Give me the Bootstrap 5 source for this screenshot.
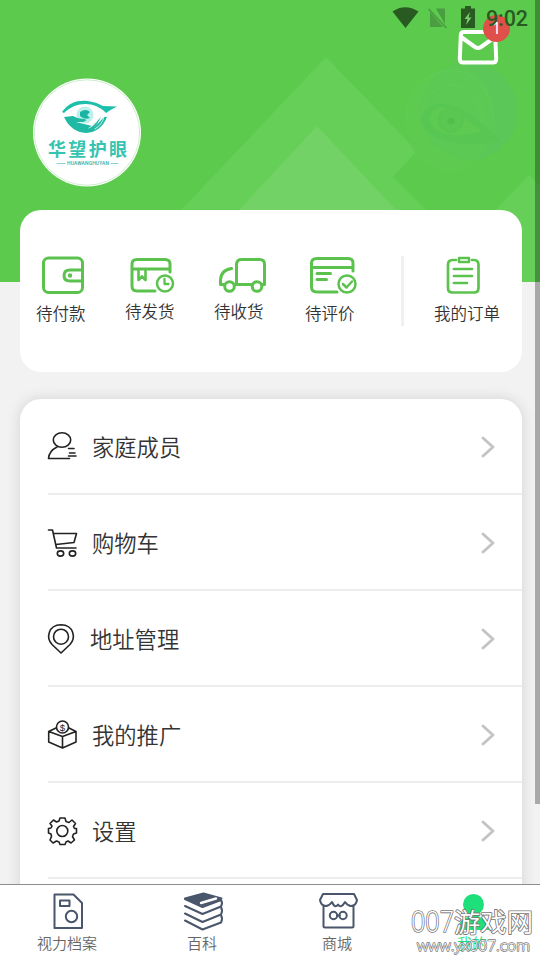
<!DOCTYPE html>
<html lang="zh-CN">
<head>
<meta charset="utf-8">
<meta name="viewport" content="width=device-width, initial-scale=1">
<title>我的</title>
<link href="https://cdn.jsdelivr.net/npm/bootstrap@5.3.0/dist/css/bootstrap.min.css" rel="stylesheet">
<style>
html,body{height:100%;overflow:hidden}
body{font-family:"Noto Sans CJK SC",sans-serif;background:#f2f2f2;color:#333;font-weight:350}
svg{display:block;overflow:visible;fill:none;stroke-linecap:round;stroke-linejoin:round}
.screen{width:540px;height:960px}
.hero{height:282px;background:#5cca4d;overflow:hidden}
.hero-art{left:0;top:0}
.status{left:390px;top:0}
.content{height:884px;overflow:hidden}
.hero-top{height:210px;padding:78px 0 0 33px}
.mail{left:456px;top:28px}
.mail-count{left:483px;top:15px;width:27px;height:27px;background:#e0504b;font:400 16px/27px "Noto Sans",sans-serif}
.clock{left:486px;top:7px;font:500 21.5px/24px Roboto,sans-serif;color:#285a22;letter-spacing:-.1px}
.panel{width:502px;margin-left:20px;background:#fff}
.orders{height:162px;border-radius:21px;padding:42px 0 0 16px}
.order-item{width:50px;margin-right:39px}
.order-item.last-step{margin:0 0 0 2px}
.order-item.wide{width:68px;margin-right:0}
.order-label{font-size:16.5px;line-height:24px;white-space:nowrap;padding-top:1px}
.order-item svg{stroke:#5cc24e;stroke-width:3}
.low .order-label{padding-top:3px}
.divider{width:3px;height:70px;background:#f0f0f0;margin:4px 30px 0 46px}
.menu{margin-top:27px;border-radius:21px 21px 0 0;box-shadow:0 0 14px rgba(40,40,60,.15);height:600px;padding-left:28px}
.menu-row{height:96px;border-bottom:2px solid #ededed;font-size:22.3px;padding:2px 27px 0 0}
.menu-icon{stroke:#222;stroke-width:1.6;margin:0 15px 0 -1px}
.menu-icon.narrow{margin-right:13px}
.chev{stroke:#c4c4c4;stroke-width:3}
.tabs{height:76px;border-top:1px solid #8d8d8d;background:#fff;font-size:15px;font-weight:350;color:#666}
.tabs svg{stroke:#4a566b;stroke-width:2}
.tab-label{line-height:20px;margin-top:2px;margin-left:-1px}
.tab-on{color:#1ee07a}
.thumb{left:535px;top:0;width:5px;height:804px;background:rgba(0,0,0,.3)}
.stamp{left:410px;top:902px}
</style>
<script src="https://cdn.jsdelivr.net/npm/bootstrap@5.3.0/dist/js/bootstrap.bundle.min.js"></script>
</head>
<body>
<div class="screen position-relative overflow-hidden">
<main class="content position-relative">
  <div class="hero position-absolute top-0 start-0 w-100">
    <svg class="hero-art" width="540" height="282" viewBox="0 0 540 282">
      <path d="M326 57 417 151 393 177 498 282H113z" fill="#66cf58"/>
      <path d="M317 126 464 282H172z" fill="#72d265"/>
      <path d="M529 175 426 282H540V186z" fill="#66cf58"/>
      <ellipse cx="450" cy="122" rx="44" ry="50" fill="#5ecb50"/>
      <circle cx="469" cy="111" r="49" fill="#5bc953"/>
      <path d="M477 63A49 49 0 0 1 478 159 55 55 0 0 0 494 120Q494 82 466 66z" fill="#5ac758"/>
      <path d="M406 122C405 57 492 50 494 122M421 120C422 75 480 70 482 121" stroke="#63cd5a" stroke-width=".8"/>
      <path d="M420 119Q427 103 443 104 469 107 500 141 465 148 442 140 426 135 420 119z" fill="#58c652"/>
      <path d="M429 118Q438 97 463 117L482 131Q454 139 438 131 431 126 429 118z" fill="#5fca51"/>
      <circle cx="451" cy="120" r="13" fill="#58c651"/>
      <circle cx="451" cy="120" r="8.500" fill="#5ac752" stroke="#5dca55"/>
      <circle cx="451" cy="121" r="3.500" fill="#53bf4a"/>
    </svg>
  </div>

  <header class="hero-top position-relative">
    <svg width="108" height="109" viewBox="33 78 108 109">
      <circle cx="87" cy="132.500" r="54" fill="#fff"/>
      <circle cx="87" cy="132.500" r="52.700" stroke="#9bdc98" stroke-width=".5"/>
      <circle cx="85" cy="115" r="8.500" fill="#bdf0ea"/>
      <path d="M80 112Q86 108 90 112L87 115 90 118Q84 120 80 116z" fill="#18b5a2"/>
      <path d="M62 112C73 96 92 100 103 106L117 106.500Q110 110 106 113C94 100 75 102 64 113z" fill="#1dbfac"/>
      <path d="M64 117 73 116Q78 119 85 119 88 121 82 122L76 122 92 126 101 117Q98 124 93 129L104 117 107 117Q101 132 86 133 71 132 64 117z" fill="#1fb9a4"/>
      <path d="M89 128Q97 124 99 117M95 129Q102 125 104 117" stroke="#fff" stroke-width=".8"/>
      <text x="48" y="156" textLength="79" font-family="Noto Sans CJK SC,sans-serif" font-weight="700" font-size="18" fill="#35c4b2">华望护眼</text>
      <text x="67" y="165" textLength="42" font-family="Roboto,sans-serif" font-weight="500" font-size="5" fill="#37aaa0">HUAWANGHUYAN</text>
      <path d="M57 163.500H65M111 163.500H118" stroke="#6cc8bd" stroke-width=".8"/>
    </svg>
    <svg class="mail position-absolute" width="44" height="38" viewBox="456 28 44 38">
      <path d="M464 32H492Q495 32 495.200 35L496.200 59Q496.200 62.500 493 62.500H463Q459.800 62.500 459.800 59L460.800 35Q461 32 464 32zM461 37 475 47Q478 49 481 47L495 37" stroke="#fff" stroke-width="4"/>
    </svg>
    <div class="mail-count position-absolute rounded-circle text-white text-center">1</div>
    <svg class="status position-absolute" width="90" height="32" viewBox="390 0 90 32">
      <path d="M392.500 11.500Q405 3 418.500 11.500L405.500 28z" fill="#285a22"/>
      <path d="M436 8.500H445V24zM430 12V27H443z" fill="#4a9d40"/>
      <path d="M429 9.500 446 27.500" stroke="#4a9d40" stroke-width="1.700"/>
      <path d="M461 8.500H465V6H471V8.500H475V28H461z" fill="#285a22"/>
      <path d="M470 12 464.500 19H467.500L466 25 471.500 17.500H468.500z" fill="#78cf6b"/>
    </svg>
    <div class="clock position-absolute">9:02</div>
  </header>

  <section class="panel orders position-relative d-flex align-items-start">
    <div class="order-item low">
      <svg width="50" height="46" viewBox="36 252 50 46"><rect x="43.500" y="258" width="39" height="34.500" rx="5"/><path d="M82 270H70Q64 270 64 275.500T70 281H82"/><circle cx="70" cy="275.500" r="1.200" fill="#5cc24e" stroke-width="2"/></svg>
      <div class="order-label">待付款</div>
    </div>
    <div class="order-item">
      <svg width="50" height="46" viewBox="125 252 50 46"><path d="M155 291H137Q132 291 132 286V264Q132 259.500 137 259.500H165Q170 259.500 170 264V272M132 269H170"/><path d="M138.500 270V280L142 276.500 145.500 280V270" stroke-width="2.600"/><circle cx="165" cy="283.500" r="8" stroke-width="2.500"/><path d="M164.500 279V284H168.500" stroke-width="2.300"/></svg>
      <div class="order-label">待发货</div>
    </div>
    <div class="order-item">
      <svg width="50" height="46" viewBox="214 252 50 46"><path d="M236.500 284V264Q237 259.500 241.500 259.500H259.500Q264.500 259.500 264.500 264V284.500H262M252 284.500H235M224 284.500H220.500V280Q221 270 231.500 268.500"/><circle cx="229.500" cy="286.500" r="4.800"/><circle cx="257" cy="286.500" r="4.800"/></svg>
      <div class="order-label">待收货</div>
    </div>
    <div class="order-item last-step low">
      <svg width="50" height="46" viewBox="305 252 50 46"><path d="M337 292H317Q311.500 292 311.500 287V263Q311.500 258.500 317 258.500H348Q353 258.500 353 263V271M312 267.500H353M317 273.500H330.500M317 279.500H326.500"/><circle cx="347" cy="284" r="8.500" stroke-width="2.500"/><path d="M343 284 346.500 287.500 352 281.500" stroke-width="2.500"/></svg>
      <div class="order-label">待评价</div>
    </div>
    <div class="divider flex-shrink-0"></div>
    <div class="order-item wide low flex-shrink-0">
      <svg width="50" height="46" viewBox="434 252 50 46"><path d="M456 260H452.500Q448 260 448 265V288Q448 292.500 452.500 292.500H474Q478.500 292.500 478.500 288V265Q478.500 260 474 260H472M454 269H472M454 276H472M454 283H467" stroke-width="2.700"/><rect x="459" y="258" width="10" height="4" stroke-width="2.500"/></svg>
      <div class="order-label">我的订单</div>
    </div>
  </section>

  <section class="panel menu position-relative">
    <div class="menu-row d-flex align-items-center">
      <svg class="menu-icon" width="30" height="32" viewBox="47 431 30 32"><ellipse cx="62" cy="440" rx="8.700" ry="7.300"/><path d="M57 447Q49 451 48.500 458.500H69.500M68.500 448.500H74M69.500 453H75M68.500 456H76"/></svg>
      <span>家庭成员</span>
      <svg class="chev ms-auto" width="14" height="20"><path d="M2 1 12 10 2 19"/></svg>
    </div>
    <div class="menu-row d-flex align-items-center">
      <svg class="menu-icon" width="30" height="32" viewBox="47 527 30 32"><path d="M48.500 530H52.500L56.500 548H76M53.500 533.500H76.500L74 542.500 56 544.500"/><ellipse cx="60.500" cy="553.500" rx="3.200" ry="2.600"/><ellipse cx="72.500" cy="553.500" rx="3.200" ry="2.600"/></svg>
      <span>购物车</span>
      <svg class="chev ms-auto" width="14" height="20"><path d="M2 1 12 10 2 19"/></svg>
    </div>
    <div class="menu-row d-flex align-items-center">
      <svg class="menu-icon narrow" width="30" height="32" viewBox="47 623 30 32"><path d="M61 653 52 644.500C46 638 48 625 61 624.700 74 625 76 638 70 644.500z"/><circle cx="61" cy="636.700" r="7.500"/></svg>
      <span>地址管理</span>
      <svg class="chev ms-auto" width="14" height="20"><path d="M2 1 12 10 2 19"/></svg>
    </div>
    <div class="menu-row d-flex align-items-center">
      <svg class="menu-icon" width="30" height="32" viewBox="47 719 30 32"><path d="M56 728 48.700 731.500 62.500 736.500 76 731.500 69 728M48.700 731.500V742L62.500 748 76 742V731.500M62.500 736.500V748"/><circle cx="62.500" cy="727" r="6" fill="#fff"/><text x="59.800" y="730.500" font-family="Liberation Sans,sans-serif" font-size="9.500" fill="#222" stroke="none">$</text></svg>
      <span>我的推广</span>
      <svg class="chev ms-auto" width="14" height="20"><path d="M2 1 12 10 2 19"/></svg>
    </div>
    <div class="menu-row d-flex align-items-center">
      <svg class="menu-icon" width="30" height="32" viewBox="47 815 30 32"><path d="M60 818H65L66 821.500 69 822.500 72 820 75.500 823.500 73.500 826.500 74.500 828.500H76.500V833L73.500 834 72.500 836.500 74.500 840 71 843 68 841 66 842 65 844.500H60L59 842 56.500 841 53 843 50 840 51.500 836.500 51 834 48.500 833V828.500L51 828 52 826 50 823.500 53.500 820 56.500 822 59 821z"/><circle cx="62.300" cy="831" r="5.500"/></svg>
      <span>设置</span>
      <svg class="chev ms-auto" width="14" height="20"><path d="M2 1 12 10 2 19"/></svg>
    </div>
  </section>
</main>

<nav class="tabs row g-0 text-center">
  <div class="col-3 d-flex flex-column align-items-center">
    <svg width="50" height="46" viewBox="42 885 50 46"><path d="M53.500 894.500H72.500L81 903V928H53.500zM59 900.500H68.500V906H59z"/><circle cx="70.500" cy="916.500" r="5.700"/></svg>
    <div class="tab-label">视力档案</div>
  </div>
  <div class="col-3 d-flex flex-column align-items-center">
    <svg width="50" height="46" viewBox="177 885 50 46"><path d="M184 898.500 202.500 893.500 220.500 898.500 201.500 905z" fill="#4a566b"/><path d="M200 903 215 898.500" stroke="#fff" stroke-width="2.400"/><path d="M184 899 201.500 907 220 900Q222 903 220 906.500L201.500 914 184 906M220 907Q222 911 220 914.500L201.500 922 184 913.500M220 915Q222 919 220 922.500L201.500 929.500 184 920.500"/></svg>
    <div class="tab-label">百科</div>
  </div>
  <div class="col-3 d-flex flex-column align-items-center">
    <svg width="50" height="46" viewBox="312 885 50 46"><path d="M322 894H353L356 900Q355 906 350 906 347 906 344 902 340 909 337 904.500 334 909 331 902 328 906 325 906 320 906 319 900zM322.500 906V926Q322.500 927.500 324 927.500H351Q352.500 927.500 352.500 926V906M336 915.500H339"/><circle cx="332.500" cy="915.500" r="3.700"/><circle cx="342" cy="915.500" r="3.700"/></svg>
    <div class="tab-label">商城</div>
  </div>
  <div class="col-3 d-flex flex-column align-items-center tab-on">
    <svg width="50" height="46" viewBox="448 885 50 46"><circle cx="473.500" cy="904.500" r="10.500" fill="#1ee07a" stroke="none"/><path d="M467 914H480L479 917Q489 919 489 930H458Q458 919 468 917z" fill="#1ee07a" stroke="none"/></svg>
    <div class="tab-label">我的</div>
  </div>
</nav>
<svg class="stamp position-absolute" width="125" height="54" viewBox="410 902 125 54">
  <g fill="#fff" stroke="#777" stroke-width="1.700" paint-order="stroke">
  <text x="411" y="932" textLength="43" lengthAdjust="spacingAndGlyphs" font-family="Open Sans,sans-serif" font-size="29">007</text>
  <text x="454" y="932" textLength="79" lengthAdjust="spacingAndGlyphs" font-family="Noto Sans CJK SC,sans-serif" font-size="26">游戏网</text>
  <text x="417" y="951" textLength="113" lengthAdjust="spacingAndGlyphs" font-family="Open Sans,sans-serif" font-size="15" stroke-width="1.400">www.yx007.com</text>
  </g>
</svg>
<div class="thumb position-absolute"></div>
</div>
</body>
</html>
